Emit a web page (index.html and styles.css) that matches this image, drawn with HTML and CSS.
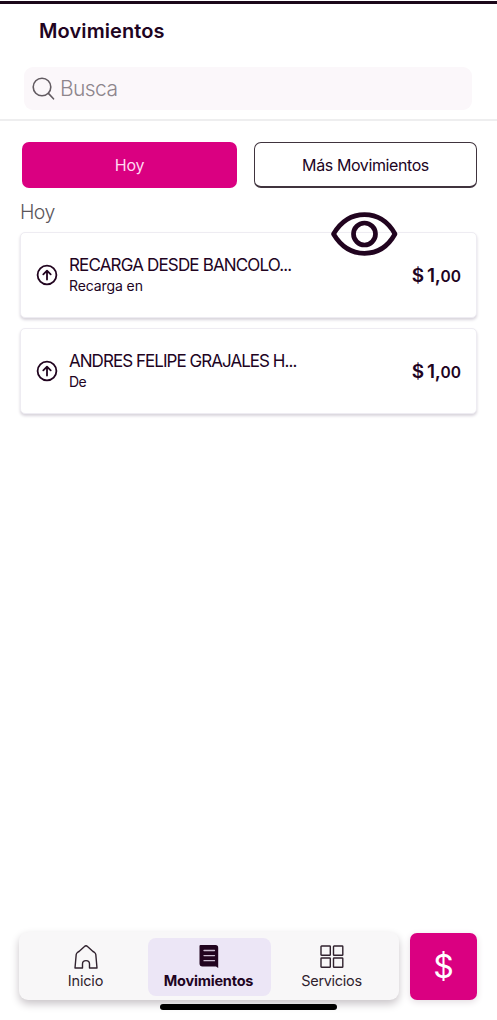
FILE: index.html
```html
<!DOCTYPE html>
<html lang="es">
<head>
<meta charset="utf-8">
<title>Movimientos</title>
<link rel="stylesheet" href="styles.css">
</head>
<body>
<div class="screen">
  <header class="header">
    <h1 class="title"><span>Movimientos</span></h1>
    <div class="search">
      <svg class="search-icon" width="24" height="26" viewBox="0 0 24 26"><circle cx="10" cy="11" r="8.8"/><path d="M16.4 17.4 21.5 22.8"/></svg>
      <span class="placeholder">Busca</span>
    </div>
  </header>
  <main class="content">
    <div class="filters">
      <button class="filter filter-on"><span class="filter-today">Hoy</span></button>
      <button class="filter filter-more"><span class="more-label">Más Movimientos</span></button>
    </div>
    <h2 class="day"><span>Hoy</span></h2>
    <div class="list">
      <svg class="eye" width="68" height="46" viewBox="0 0 68 46"><path d="M3.500 23C11 10.500 22 3.700 34.500 3.700S58 10.500 65 23C58 35.500 47 42.300 34.500 42.300S11 35.500 3.500 23Z"/><circle cx="34.500" cy="23" r="11"/></svg>
      <article class="card">
        <svg class="arrow" width="22" height="22" viewBox="0 0 22 22"><circle cx="11" cy="11" r="9.400"/><path d="M11 15.500V6.900M7.300 10.300 11 6.700 14.700 10.300"/></svg>
        <div class="info">
          <div class="name"><span class="name-a">RECARGA DESDE BANCOLO...</span></div>
          <div class="detail"><span class="detail-a">Recarga en</span></div>
        </div>
        <div class="amount"><span class="currency">$</span><span class="whole">1,</span><span class="cents">00</span></div>
      </article>
      <article class="card">
        <svg class="arrow" width="22" height="22" viewBox="0 0 22 22"><circle cx="11" cy="11" r="9.400"/><path d="M11 15.500V6.900M7.300 10.300 11 6.700 14.700 10.300"/></svg>
        <div class="info">
          <div class="name"><span class="name-b">ANDRES FELIPE GRAJALES H...</span></div>
          <div class="detail"><span class="detail-b">De</span></div>
        </div>
        <div class="amount"><span class="currency">$</span><span class="whole">1,</span><span class="cents">00</span></div>
      </article>
    </div>
  </main>
  <footer class="footer">
    <nav class="tabs">
      <a class="tab">
        <svg class="line-icon" width="24" height="25" viewBox="0 0 24 25"><path d="M1 24 2.200 10.500C2.300 9.300 3 8.700 4 8L5 7.500 10.500 2.600Q12 1 13.500 2.600L19 7.500 20 8C21 8.700 21.700 9.300 21.800 10.500L23 24H15.500V20C15.500 15.500 8.500 15.500 8.500 20V24Z"/></svg>
        <span class="tab-label tab-home">Inicio</span>
      </a>
      <a class="tab tab-on">
        <svg width="20" height="25" viewBox="0 0 20 25"><path class="doc" d="M1.500 1H16.500Q19.200 1 19.200 3.700V24L17 22.500H3.500Q.5 22.500.5 19.500V2Q.5 1 1.500 1Z"/><path class="doc-lines" d="M5 6.500H15.500M5 11.600H15.500M5 16.700H15.500"/></svg>
        <span class="tab-label tab-moves">Movimientos</span>
      </a>
      <a class="tab">
        <svg class="line-icon" width="24" height="25" viewBox="0 0 24 25"><rect x="1" y="2" width="9.300" height="9.300" rx=".6"/><rect x="13.500" y="2" width="9.300" height="9.300" rx=".6"/><rect x="1" y="14" width="9.300" height="9.300" rx=".6"/><rect x="13.500" y="14" width="9.300" height="9.300" rx=".6"/></svg>
        <span class="tab-label tab-services">Servicios</span>
      </a>
    </nav>
    <button class="pay">$</button>
  </footer>
  <div class="home-indicator"></div>
</div>
</body>
</html>
```
FILE: styles.css
```css
* { box-sizing: border-box; }
body { margin: 0; background: #fff; color: #21041f; font-family: Inter, "Noto Sans", sans-serif; }
button { font: inherit; margin: 0; padding: 0; border: 0; }
svg { display: block; flex: none; fill: none; stroke: currentColor; stroke-linecap: round; stroke-linejoin: round; }
.screen { height: 1020px; display: flex; flex-direction: column; overflow: hidden; border-top: 1px solid #fff; }
.header { height: 120px; flex: none; border-top: 3px solid #1b0719; border-bottom: 2px solid #eeeeef; padding: 14px 25px 0 24px; }
.title { margin: 0 0 0 15px; height: 28px; line-height: 27px; font-size: 20px; font-weight: 600; letter-spacing: .1px; }
.search { margin-top: 21px; height: 43px; border-radius: 9px; background: #fbf7fa; display: flex; align-items: center; padding-left: 8px; gap: 4px; color: #8d858c; font-size: 21px; }
.search-icon { stroke: #625b61; stroke-width: 1.6; }
.placeholder { font-weight: 300; letter-spacing: -.6px; }
.content { flex: 1; padding: 21px 20px 0; }
.filters { display: flex; gap: 17px; padding-left: 2px; }
.filter { width: 215px; height: 46px; border-radius: 7px; font-size: 16px; line-height: 46px; text-align: center; color: #21041f; background: #fff; }
.filter-on { background: #da0081; color: #ffd9f0; }
.filter-today { letter-spacing: -.3px; }
.filter-more { width: 223px; border: 1.5px solid #40343e; border-bottom-width: 2px; line-height: 44px; }
.more-label { letter-spacing: -.4px; }
.day { margin: 10px 0 0; height: 34px; line-height: 29px; font-size: 19.500px; font-weight: 300; letter-spacing: -.6px; color: #5c565b; }
.list { position: relative; display: flex; flex-direction: column; gap: 9.500px; }
.eye { position: absolute; left: 310px; top: -21px; stroke-width: 4.700; color: #21041f; }
.card { width: 457px; height: 86px; border: 1px solid #eeecf2; border-radius: 5px; background: #fff; box-shadow: 0 2px 3px #d8d4dc; display: flex; align-items: center; padding: 0 15px; }
.arrow { stroke-width: 1.8; }
.info { margin-left: 11px; flex: 1; }
.name { height: 22px; line-height: 22px; font-size: 17px; white-space: nowrap; }
.name-a { letter-spacing: -.84px; }
.name-b { letter-spacing: -.96px; }
.detail { height: 20px; line-height: 20px; font-size: 14px; letter-spacing: -.1px; }
.detail-b { letter-spacing: -.6px; }
.amount { display: flex; align-items: baseline; line-height: 24px; font-weight: 600; padding-top: 3px; }
.currency { font-size: 19px; margin-right: 3px; }
.whole { font-size: 19px; letter-spacing: -.3px; }
.cents { font-size: 15.500px; }
.footer { flex: none; height: 68px; padding-left: 19px; display: flex; gap: 11px; }
.tabs { width: 380px; height: 68px; border-radius: 9px; background: #f8f7f8; box-shadow: 0 4px 9px #c9c4c8; display: flex; padding: 6px 5px 5px 6px; }
.tab { width: 123px; height: 58px; padding: 6px 2px 0 0; border-radius: 8px; display: flex; flex-direction: column; align-items: center; color: #30222e; }
.tab-on { background: #ece6f6; color: #21041f; }
.tab-label { font-size: 14.500px; line-height: 18px; margin-top: 3px; }
.tab-home { letter-spacing: -.2px; }
.tab-moves { font-weight: 700; letter-spacing: -.2px; }
.tab-services { letter-spacing: -.3px; }
.line-icon { stroke-width: 1.4; }
.doc { fill: #21041f; stroke: none; }
.doc-lines { stroke: #c9bbcf; stroke-width: 1.3; }
.pay { width: 67px; height: 67px; margin-top: 1px; border-radius: 7px; background: #da0081; color: #fff; font-size: 32px; line-height: 66px; box-shadow: 0 2px 7px #e3dce1; }
.home-indicator { flex: none; width: 177px; height: 6px; margin: 4px 0 10px 160px; border-radius: 3px; background: #000; }
```
